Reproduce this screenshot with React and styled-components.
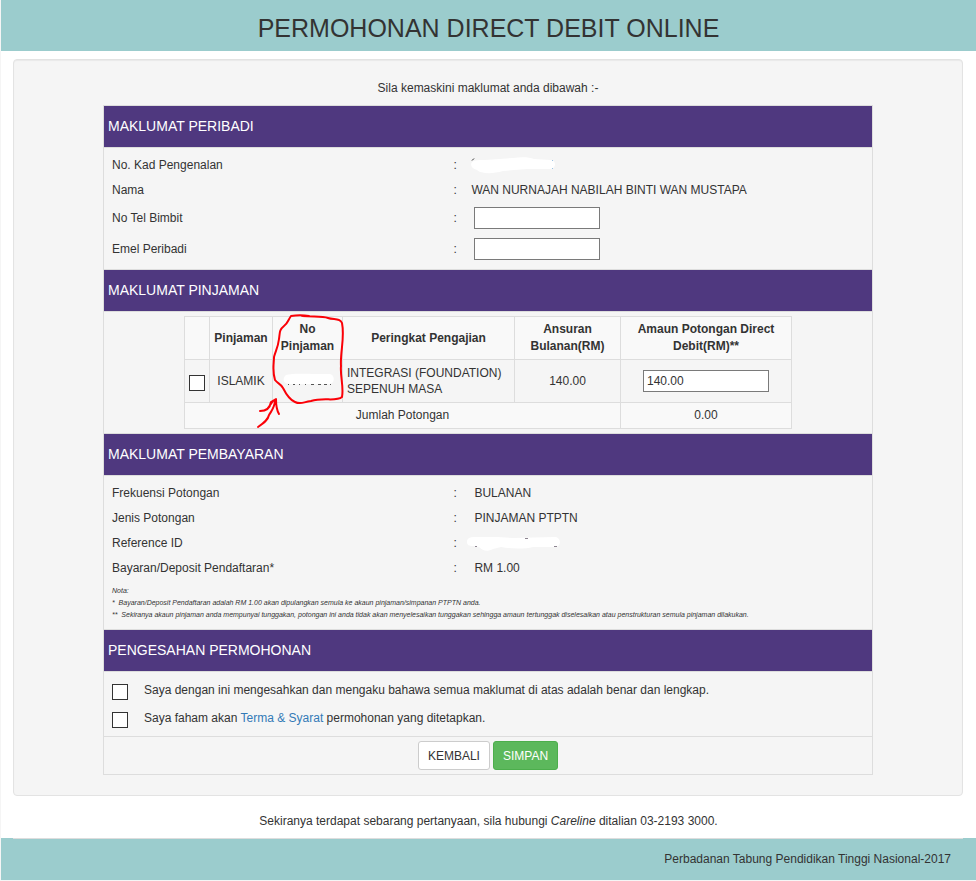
import React, { useState } from "react";
import styled, { createGlobalStyle } from "styled-components";

const palette = {
  teal: "#9bcccd",
  purple: "#4f387f",
  well: "#f5f5f5",
  stripe: "#f9f9f9",
  line: "#dddddd",
  text: "#333333",
  link: "#337ab7",
  green: "#5cb85c",
  red: "#fb0007"
};

export default function App() {
  const [phone, setPhone] = useState("");
  const [email, setEmail] = useState("");
  const [amount, setAmount] = useState("140.00");
  return (
    <>
      <GlobalStyle />
      <Page>
        <TopBar>
          <Title>PERMOHONAN DIRECT DEBIT ONLINE</Title>
        </TopBar>
        <Well>
          <Intro>Sila kemaskini maklumat anda dibawah :-</Intro>
          <Form onSubmit={e => e.preventDefault()}>
            <SectionTitle>MAKLUMAT PERIBADI</SectionTitle>
            <Fields>
              <InfoRow label="No. Kad Pengenalan">
                <IdCover />
              </InfoRow>
              <InfoRow label="Nama">
                WAN NURNAJAH NABILAH BINTI WAN MUSTAPA
              </InfoRow>
              <InfoRow label="No Tel Bimbit" htmlFor="phone" tall inset>
                <TextInput
                  id="phone"
                  type="tel"
                  value={phone}
                  onChange={e => setPhone(e.target.value)}
                />
              </InfoRow>
              <InfoRow label="Emel Peribadi" htmlFor="email" tall inset>
                <TextInput
                  id="email"
                  type="email"
                  value={email}
                  onChange={e => setEmail(e.target.value)}
                />
              </InfoRow>
            </Fields>

            <SectionTitle>MAKLUMAT PINJAMAN</SectionTitle>
            <LoanWrap>
              <LoanTable>
                <colgroup>
                  <Col $width={25} />
                  <Col $width={63} />
                  <Col $width={70} />
                  <Col $width={172} />
                  <Col $width={106} />
                  <Col $width={171} />
                </colgroup>
                <thead>
                  <HeadRow>
                    <td></td>
                    <th>Pinjaman</th>
                    <th>No Pinjaman</th>
                    <th>Peringkat Pengajian</th>
                    <th>Ansuran Bulanan(RM)</th>
                    <th>
                      <label htmlFor="amount">
                        Amaun Potongan Direct Debit(RM)**
                      </label>
                    </th>
                  </HeadRow>
                </thead>
                <tbody>
                  <LoanRow>
                    <td>
                      <Checkbox type="checkbox" aria-label="ISLAMIK" $table />
                    </td>
                    <td>ISLAMIK</td>
                    <td></td>
                    <LevelCell>INTEGRASI (FOUNDATION) SEPENUH MASA</LevelCell>
                    <td>140.00</td>
                    <td>
                      <TextInput
                        id="amount"
                        type="text"
                        value={amount}
                        onChange={e => setAmount(e.target.value)}
                      />
                    </td>
                  </LoanRow>
                  <TotalRow>
                    <td colSpan={5}>Jumlah Potongan</td>
                    <td>0.00</td>
                  </TotalRow>
                </tbody>
              </LoanTable>
              <Marker />
            </LoanWrap>

            <SectionTitle>MAKLUMAT PEMBAYARAN</SectionTitle>
            <Fields>
              <InfoRow label="Frekuensi Potongan" inset>
                BULANAN
              </InfoRow>
              <InfoRow label="Jenis Potongan" inset>
                PINJAMAN PTPTN
              </InfoRow>
              <InfoRow label="Reference ID">
                <ReferenceCover />
              </InfoRow>
              <InfoRow label="Bayaran/Deposit Pendaftaran*" inset>
                RM 1.00
              </InfoRow>
              <Notes>
                <div>Nota:</div>
                <div>
                  *&nbsp; Bayaran/Deposit Pendaftaran adalah RM 1.00 akan
                  dipulangkan semula ke akaun pinjaman/simpanan PTPTN anda.
                </div>
                <div>
                  **&nbsp; Sekiranya akaun pinjaman anda mempunyai tunggakan,
                  potongan ini anda tidak akan menyelesaikan tunggakan sehingga
                  amaun tertunggak diselesaikan atau penstrukturan semula
                  pinjaman dilakukan.
                </div>
              </Notes>
            </Fields>

            <SectionTitle>PENGESAHAN PERMOHONAN</SectionTitle>
            <Consents>
              <ConsentRow>
                <Checkbox type="checkbox" id="confirm" />
                <label htmlFor="confirm">
                  Saya dengan ini mengesahkan dan mengaku bahawa semua maklumat
                  di atas adalah benar dan lengkap.
                </label>
              </ConsentRow>
              <ConsentRow>
                <Checkbox type="checkbox" id="terms" />
                <label htmlFor="terms">
                  Saya faham akan <Link href="#terma">Terma &amp; Syarat</Link>{" "}
                  permohonan yang ditetapkan.
                </label>
              </ConsentRow>
            </Consents>
            <Actions>
              <Button type="button">KEMBALI</Button>
              <Button type="submit" $primary>
                SIMPAN
              </Button>
            </Actions>
          </Form>
        </Well>
        <Contact>
          Sekiranya terdapat sebarang pertanyaan, sila hubungi{" "}
          <em>Careline</em> ditalian 03-2193 3000.
        </Contact>
        <Footer>
          <FooterText>Perbadanan Tabung Pendidikan Tinggi Nasional-2017</FooterText>
        </Footer>
      </Page>
    </>
  );
}

function InfoRow({ label, htmlFor, tall, inset, children }) {
  return (
    <Row $tall={tall}>
      {htmlFor ? <label htmlFor={htmlFor}>{label}</label> : <span>{label}</span>}
      <span>:</span>
      <Value $inset={inset}>{children}</Value>
    </Row>
  );
}

function IdCover() {
  return (
    <Cover width="88" height="20" viewBox="0 0 88 20" aria-hidden="true">
      <path d="M1 5.5l2-2" stroke="#333" fill="none" />
      <path
        d="M0 9C1 5 6 5 14 5L42 3C50 2 58 2 63 4L80 5C86 6 85 14 79 14L56 14L32 16C22 19 10 19 6 15C2 14 0 12 0 9Z"
        fill="#fff"
      />
      <path d="M81 5.5h1M81 13.5h1" stroke="#9cc4e4" fill="none" />
    </Cover>
  );
}

function ReferenceCover() {
  return (
    <Cover width="98" height="20" viewBox="0 0 98 20" $pull aria-hidden="true">
      <path
        d="M0 9C0 5 3 4 8 4L30 4L46 5L88 4C94 4 95 14 88 14L66 14C58 16 44 16 34 14L26 16C20 19 16 18 12 14L6 13C2 13 0 12 0 9Z"
        fill="#fff"
      />
      <path d="M8 13.5h2M58 5.5h3M87 13.5h3" stroke="#8d8490" fill="none" />
    </Cover>
  );
}

// hand drawn circle and arrow around the loan number column
function Marker() {
  return (
    <MarkerSvg width="96" height="120" viewBox="0 0 96 120" aria-hidden="true">
      <path d="M34 70.5h1M39 70.5h2M45 70.5h1M51 70.5h1M57 70.5h3M64 70.5h3M70 70.5h3M76 70.5h1" stroke="#555" />
      <path
        d="M31 62C33 59 52 60 62 60L76 60C81 61 81 69 76 70L36 70C30 70 28 66 31 62Z"
        fill="#fff"
      />
      <g
        fill="none"
        stroke={palette.red}
        strokeWidth="2"
        strokeLinecap="round"
        strokeLinejoin="round"
      >
        <path d="M55 2C49 1 43 1 37 2C34 6 34 9 30 12C25 16 26 19 25 25C24 33 22 36 20 43C20 50 18 56 21 66C24 70 26 69 29 74C33 82 36 86 41 88C47 91 49 88 57 87C70 83 82 88 88 83C90 73 86 62 87 52C86 38 91 24 88 9C86 4 80 6 74 4C68 2 60 3 48 2" />
        <path d="M4 113C10 109 14 106 15 101C18 96 21 93 21 86M6 97C12 97 16 94 17 88L22 85C22 90 22 95 25 100M14 94L19 87" />
      </g>
    </MarkerSvg>
  );
}

const GlobalStyle = createGlobalStyle`
  *, *::before, *::after {
    box-sizing: border-box;
  }
  body {
    margin: 0;
    background: ${palette.well};
    color: ${palette.text};
    font-family: "Liberation Sans", Arial, sans-serif;
    font-size: 12px;
    line-height: 18px;
  }
`;
const Page = styled.div`
  margin-left: 1px;
  background: #fff;
`;
const TopBar = styled.header`
  padding: 12px 0 7px;
  background: ${palette.teal};
  text-align: center;
`;
const Title = styled.h1`
  margin: 0;
  font-size: 25px;
  font-weight: normal;
  line-height: 32px;
`;
const Well = styled.main`
  margin: 8px 13px 0 12px;
  padding: 19px 19px 20px;
  background: ${palette.well};
  border: 1px solid #e3e3e3;
  border-radius: 4px;
  box-shadow: inset 0 1px 1px rgba(0, 0, 0, 0.05);
`;
const Intro = styled.p`
  margin: 0 0 8px;
  text-align: center;
`;
const Form = styled.form`
  width: 100%;
  max-width: 770px;
  margin: 0 auto;
  border: solid ${palette.line};
  border-width: 0 1px 1px;
`;
const SectionTitle = styled.h2`
  margin: 0;
  padding: 0 4px;
  background: ${palette.purple};
  border: solid ${palette.line};
  border-width: 1px 0;
  color: #fff;
  font-size: 14px;
  font-weight: normal;
  line-height: 41px;
`;
const Fields = styled.div`
  padding: 4px 8px 5px;
`;
const Row = styled.div`
  display: grid;
  grid-template-columns: 20fr 18px 23fr;
  align-items: center;
  min-height: ${props => (props.$tall ? 31 : 25)}px;
`;
const Value = styled.div`
  display: flex;
  align-items: center;
  padding-left: ${props => (props.$inset ? 3 : 0)}px;
`;
const Cover = styled.svg`
  display: block;
  margin-left: ${props => (props.$pull ? -4 : 0)}px;
`;
const TextInput = styled.input`
  width: 126px;
  height: 22px;
  padding: 0 3px;
  background: #fff;
  border: 1px solid #7a7a7a;
  border-radius: 0;
  color: inherit;
  font: inherit;
`;
const Checkbox = styled.input`
  appearance: none;
  display: block;
  width: 16px;
  height: 16px;
  margin: ${props => (props.$table ? "4px 0 0" : "4px 16px 0 0")};
  flex: none;
  background: #fff;
  border: 1px solid ${palette.text};
  &:checked {
    background: ${palette.text};
    box-shadow: inset 0 0 0 3px #fff;
  }
`;
const LoanWrap = styled.div`
  position: relative;
  width: 100%;
  max-width: 608px;
  margin: 0 auto;
  padding: 4px 0;
`;
const LoanTable = styled.table`
  width: 100%;
  table-layout: fixed;
  border-collapse: collapse;
  line-height: 17px;
  text-align: center;
  th,
  td {
    padding: 4px;
    border: 1px solid ${palette.line};
  }
`;
const Col = styled.col`
  width: ${props => props.$width}px;
`;
const HeadRow = styled.tr`
  height: 43px;
  background: ${palette.stripe};
`;
const LoanRow = styled.tr`
  height: 43px;
  line-height: 16px;
`;
const TotalRow = styled.tr`
  height: 26px;
  background: ${palette.stripe};
`;
const LevelCell = styled.td`
  text-align: left;
`;
const MarkerSvg = styled.svg`
  position: absolute;
  top: 2px;
  left: 70px;
  pointer-events: none;
`;
const Notes = styled.div`
  padding: 5px 0 3px;
  font-size: 7px;
  font-style: italic;
  line-height: 12px;
`;
const Consents = styled.div`
  padding: 4px 8px;
`;
const ConsentRow = styled.div`
  display: flex;
  align-items: center;
  min-height: 28px;
`;
const Link = styled.a`
  color: ${palette.link};
  text-decoration: none;
`;
const Actions = styled.div`
  display: flex;
  justify-content: center;
  gap: 3px;
  padding: 4px;
  border-top: 1px solid ${palette.line};
`;
const Button = styled.button`
  height: 29px;
  padding: 0 9px;
  background: ${props => (props.$primary ? palette.green : "#fff")};
  border: 1px solid ${props => (props.$primary ? "#4cae4c" : "#ccc")};
  border-radius: 3px;
  color: ${props => (props.$primary ? "#fff" : palette.text)};
  font: inherit;
  cursor: pointer;
`;
const Contact = styled.p`
  margin: 0;
  padding: 16px 0 8px;
  text-align: center;
`;
const Footer = styled.footer`
  padding: 0 13px 0 12px;
  background: ${palette.teal};
`;
const FooterText = styled.div`
  padding: 11px 12px 12px;
  border-top: 1px solid ${palette.line};
  text-align: right;
`;
